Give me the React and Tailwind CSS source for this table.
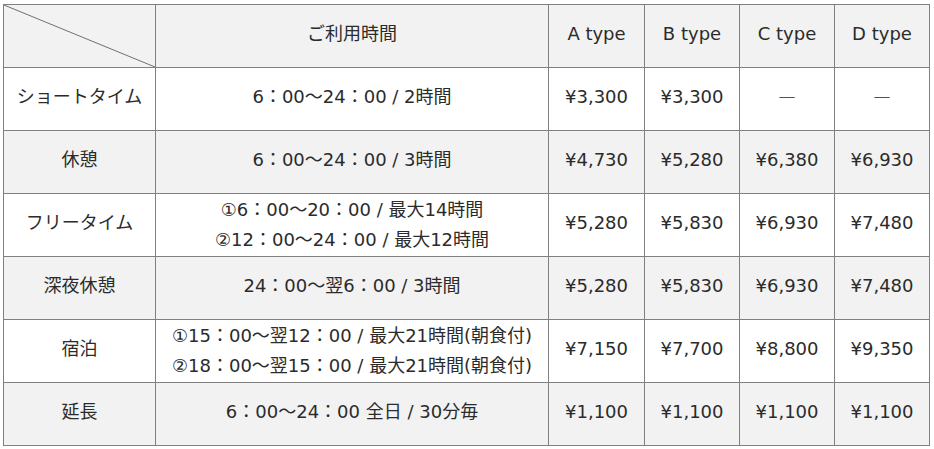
import React from "react";

const rows = [
  { name: "ショートタイム", time: ["6：00～24：00 / 2時間"], prices: ["¥3,300", "¥3,300", "―", "―"], gray: false },
  { name: "休憩", time: ["6：00～24：00 / 3時間"], prices: ["¥4,730", "¥5,280", "¥6,380", "¥6,930"], gray: true },
  {
    name: "フリータイム",
    time: ["①6：00～20：00 / 最大14時間", "②12：00～24：00 / 最大12時間"],
    prices: ["¥5,280", "¥5,830", "¥6,930", "¥7,480"],
    gray: false,
  },
  { name: "深夜休憩", time: ["24：00～翌6：00 / 3時間"], prices: ["¥5,280", "¥5,830", "¥6,930", "¥7,480"], gray: true },
  {
    name: "宿泊",
    time: ["①15：00～翌12：00 / 最大21時間(朝食付)", "②18：00～翌15：00 / 最大21時間(朝食付)"],
    prices: ["¥7,150", "¥7,700", "¥8,800", "¥9,350"],
    gray: false,
  },
  { name: "延長", time: ["6：00～24：00 全日 / 30分毎"], prices: ["¥1,100", "¥1,100", "¥1,100", "¥1,100"], gray: true },
];

const cell = "border border-[#808080] text-center align-middle p-0 pb-[5px] leading-[31px]";
const twoLine = "border border-[#808080] text-center align-middle p-0 pb-[1px] leading-[30px]";

export default function App() {
  return (
    <div
      className="w-[934px] h-[449px] bg-white pl-[3px] pt-[4px] text-[#2b2b2b] text-[18px]"
      style={{ fontFamily: '"DejaVu Sans", "Noto Sans CJK JP", sans-serif' }}
    >
      <table className="border-collapse table-fixed w-[926px]">
        <colgroup>
          <col className="w-[152px]" />
          <col className="w-[393px]" />
          <col className="w-[96px]" />
          <col className="w-[95px]" />
          <col className="w-[95px]" />
          <col className="w-[95px]" />
        </colgroup>
        <thead>
          <tr className="h-[63px] bg-[#f2f2f2]">
            <th className={`${cell} relative font-normal`}>
              {/* diagonal line */}
              <svg className="absolute inset-0 w-full h-full" preserveAspectRatio="none" viewBox="0 0 100 100">
                <line x1="0" y1="0" x2="100" y2="100" stroke="#707070" strokeWidth="1" vectorEffect="non-scaling-stroke" />
              </svg>
            </th>
            <th className={`${cell} font-normal`}>ご利用時間</th>
            <th className={`${cell} font-normal`}>A type</th>
            <th className={`${cell} font-normal`}>B type</th>
            <th className={`${cell} font-normal`}>C type</th>
            <th className={`${cell} font-normal`}>D type</th>
          </tr>
        </thead>
        <tbody>
          {rows.map((r) => (
            <tr key={r.name} className={`h-[63px] ${r.gray ? "bg-[#f2f2f2]" : "bg-white"}`}>
              <td className={cell}>{r.name}</td>
              <td className={r.time.length > 1 ? twoLine : cell}>
                {r.time.map((t) => (
                  <div key={t}>{t}</div>
                ))}
              </td>
              {r.prices.map((p, i) => (
                <td key={i} className={cell}>
                  {p === "―" ? <span className="font-['Noto_Sans_CJK_JP']">―</span> : p}
                </td>
              ))}
            </tr>
          ))}
        </tbody>
      </table>
    </div>
  );
}
